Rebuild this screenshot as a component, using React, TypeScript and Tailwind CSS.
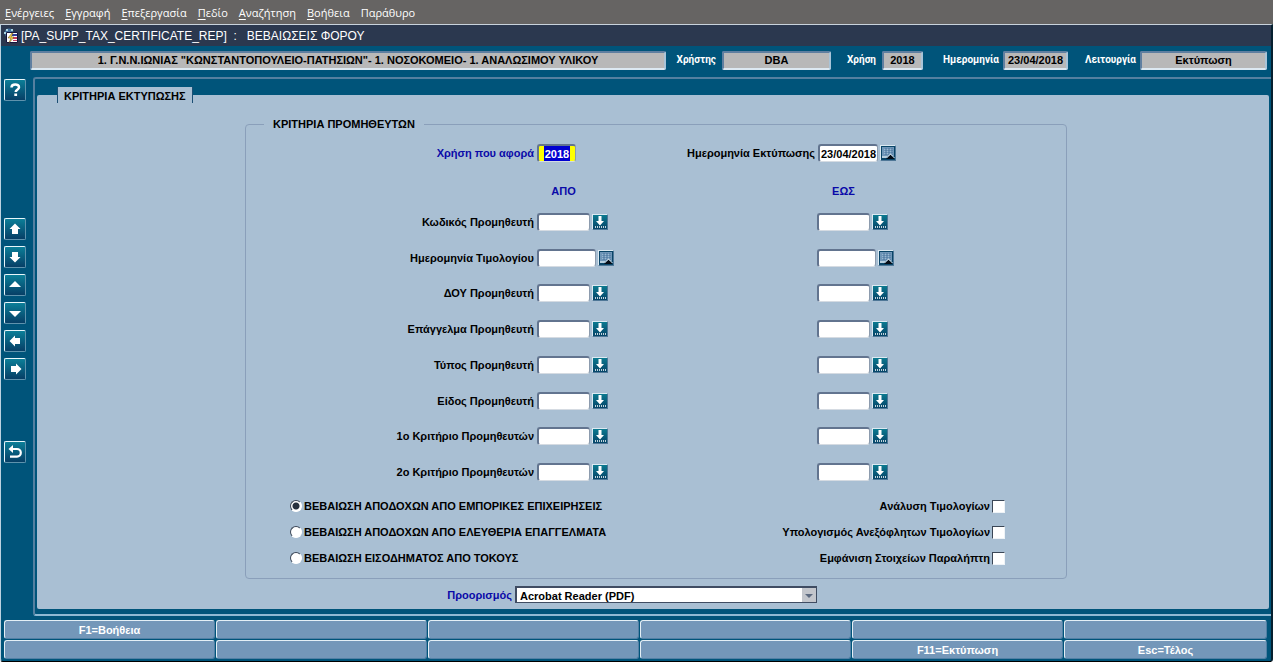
import type { ReactNode } from 'react'

const menus = ['Ενέργειες', 'Εγγραφή', 'Επεξεργασία', 'Πεδίο', 'Αναζήτηση', 'Βοήθεια']

const criteria = [
  { id: 'kodikos', label: 'Κωδικός Προμηθευτή', date: false },
  { id: 'timologio', label: 'Ημερομηνία Τιμολογίου', date: true },
  { id: 'doy', label: 'ΔΟΥ Προμηθευτή', date: false },
  { id: 'epaggelma', label: 'Επάγγελμα Προμηθευτή', date: false },
  { id: 'typos', label: 'Τύπος Προμηθευτή', date: false },
  { id: 'eidos', label: 'Είδος Προμηθευτή', date: false },
  { id: 'krit1', label: '1ο Κριτήριο Προμηθευτών', date: false },
  { id: 'krit2', label: '2ο Κριτήριο Προμηθευτών', date: false },
]

const reports = [
  'ΒΕΒΑΙΩΣΗ ΑΠΟΔΟΧΩΝ ΑΠΟ ΕΜΠΟΡΙΚΕΣ ΕΠΙΧΕΙΡΗΣΕΙΣ',
  'ΒΕΒΑΙΩΣΗ ΑΠΟΔΟΧΩΝ ΑΠΟ ΕΛΕΥΘΕΡΙΑ ΕΠΑΓΓΕΛΜΑΤΑ',
  'ΒΕΒΑΙΩΣΗ ΕΙΣΟΔΗΜΑΤΟΣ ΑΠΟ ΤΟΚΟΥΣ',
]

const options = ['Ανάλυση Τιμολογίων', 'Υπολογισμός Ανεξόφλητων Τιμολογίων', 'Εμφάνιση Στοιχείων Παραλήπτη']

const functionKeys = ['F1=Βοήθεια', '', '', '', '', '', '', '', '', '', 'F11=Εκτύπωση', 'Esc=Τέλος']

const fieldStyle =
  'h-[18px] rounded-[3px] border-t-2 border-l-2 border-r border-b border-t-[#62748f] border-l-[#62748f] border-r-[#8c9bad] border-b-[#d5dbe2] bg-white text-center outline-none'

const statusStyle =
  'h-[19px] min-w-0 rounded-[2px] border-2 border-t-[#5f7fa0] border-l-[#5f7fa0] border-r-[#a9c4d8] border-b-[#dde9f2] bg-[#b8b8b8] text-center text-black outline-none'

function AppIcon() {
  return (
    <svg width="16" height="16" viewBox="0 0 16 16" aria-hidden="true" className="shrink-0">
      <circle cx="6" cy="5" r="4.5" fill="#3f6f9e" />
      <path d="M3 1h2v2H3zM8 1h2v2H8zM1 4h3v2H1z" fill="#a9d3e0" />
      <path d="M3.500 4.500h11v10h-11z" fill="#fff" stroke="#14143c" />
      <path d="M9 6h5v2H9z" fill="#2c3f9c" />
      <path d="M10 9h4v2h-4zM10 12h4v1h-4z" fill="#c33a5c" />
      <path d="M9 5 5 10h3l-2 5 5-6H8l2-4z" fill="#ffe14a" stroke="#5a3a10" strokeWidth=".5" />
    </svg>
  )
}

function ToolButton({ label, children }: { label: string; children: ReactNode }) {
  return (
    <button
      type="button"
      aria-label={label}
      className="flex h-[22px] w-[22px] items-center justify-center rounded-[2px] border border-t-[#e8f6fa] border-l-[#e8f6fa] border-r-[#5f93ad] border-b-[#5f93ad] bg-linear-to-b from-[#0c7f98] to-[#073f66]"
    >
      <svg width="18" height="18" viewBox="0 0 18 18" fill="#fff" aria-hidden="true" className="shrink-0">
        {children}
      </svg>
    </button>
  )
}

function PickButton({ date, label }: { date?: boolean; label: string }) {
  return (
    <button
      type="button"
      aria-label={label}
      className="h-4 w-4 shrink-0 border border-t-[#dceaf2] border-l-[#dceaf2] border-r-[#4f7797] border-b-[#4f7797] bg-linear-to-b from-[#0d7a90] to-[#064468]"
    >
      {date ? (
        <svg width="14" height="14" viewBox="0 0 14 14" aria-hidden="true" className="block">
          <path d="M0 0h14v14H0z" fill="#0a4568" />
          <path d="M1 1h12v9H1z" fill="#6f96b8" />
          <path d="M3 3h9v1H3zM3 5h9v1H3zM3 7h9v1H3z" fill="#98b8d2" />
          <path d="M5 2v7M8 2v7M11 2v7" stroke="#47709a" />
          <path d="M1 10h6l-2 2H1z" fill="#b6cede" />
          <path d="M5 13 9.500 8.500 13 12v1z" fill="#050d18" />
          <path d="m5.500 12 4-4 4 4" fill="none" stroke="#e6f0f6" />
        </svg>
      ) : (
        <svg width="14" height="14" viewBox="0 0 14 14" aria-hidden="true" className="block">
          <path d="M5.500 1h3v5H11L7 10.500 3 6h2.500z" fill="#fff" />
          <path d="M2 12h11" stroke="#fff" strokeWidth="1.500" strokeDasharray="1 1" />
        </svg>
      )}
    </button>
  )
}

function StatusField({ id, label, value, labelClass, fieldClass }: {
  id: string
  label: string
  value: string
  labelClass: string
  fieldClass: string
}) {
  return (
    <div className="flex items-center">
      <label htmlFor={id} className={`text-right font-[Roboto,sans-serif] text-[10px] text-white ${labelClass}`}>
        {label}
      </label>
      <input id={id} readOnly value={value} className={`${statusStyle} ${fieldClass}`} />
    </div>
  )
}

function RangeField({ id, label, date }: { id: string; label: string; date: boolean }) {
  return (
    <div className="flex items-center gap-[2px]">
      <input id={id} aria-label={label} className={`${fieldStyle} ${date ? 'w-[59px]' : 'w-[53px]'}`} />
      <PickButton date={date} label={`Επιλογή: ${label}`} />
    </div>
  )
}

export default function App() {
  return (
    <div className="bg-white font-['Liberation_Sans',Arial,sans-serif] text-[11px] leading-4 font-bold text-black">
      <nav className="flex h-6 items-center gap-[11px] bg-[#666463] pt-[2px] pl-[5px] font-['Open_Sans',sans-serif] font-normal text-white">
        {menus.map(m => (
          <button key={m} type="button">
            <span className="underline underline-offset-2">{m[0]}</span>
            {m.slice(1)}
          </button>
        ))}
        <button type="button">Παράθυρο</button>
      </nav>

      <div className="rounded-b-[3px] border-t border-r-2 border-b border-l border-t-[#c9d3dc] border-r-[#06202f] border-b-black border-l-[#bcd2e0] bg-[#00547a]">
        <header className="flex h-[21px] items-center gap-[2px] bg-[#2b384f] pl-[2px] text-[12px] font-normal text-white">
          <AppIcon />
          <h1 className="whitespace-pre">[PA_SUPP_TAX_CERTIFICATE_REP]  :   ΒΕΒΑΙΩΣΕΙΣ ΦΟΡΟΥ</h1>
        </header>

        <div className="flex h-[31px] items-center pr-1 pb-[3px] pl-[29px]">
          <input
            aria-label="Μονάδα"
            readOnly
            value={'1. Γ.Ν.Ν.ΙΩΝΙΑΣ "ΚΩΝΣΤΑΝΤΟΠΟΥΛΕΙΟ-ΠΑΤΗΣΙΩΝ"- 1. ΝΟΣΟΚΟΜΕΙΟ- 1. ΑΝΑΛΩΣΙΜΟΥ ΥΛΙΚΟΥ'}
            className={`${statusStyle} flex-1`}
          />
          <StatusField id="user" label="Χρήστης" value="DBA" labelClass="w-14 pr-[6px]" fieldClass="w-[109px]" />
          <StatusField id="year" label="Χρήση" value="2018" labelClass="w-[51px] pr-[6px]" fieldClass="w-[41px]" />
          <StatusField id="date" label="Ημερομηνία" value="23/04/2018" labelClass="w-20 pr-1" fieldClass="w-[65px]" />
          <StatusField id="mode" label="Λειτουργία" value="Εκτύπωση" labelClass="w-[72px] pr-1" fieldClass="w-[127px]" />
        </div>

        <div className="flex">
          <aside className="flex w-8 shrink-0 flex-col pt-[2px] pl-[3px]">
            <ToolButton label="Βοήθεια">
              <path d="M5.500 6.500C5.500 2.500 13 2.500 13 6.200c0 2.500-3.300 2.600-3.300 4.800" fill="none" stroke="#fff" strokeWidth="2.500" />
              <path d="M8.300 12.500h2.800V15H8.300z" />
            </ToolButton>
            <div className="mt-[117px] flex flex-col gap-[6px]">
              <ToolButton label="Προηγούμενο μπλοκ">
                <path d="M9 3.500l5.500 5.500H12v5H6V9H3.500z" />
              </ToolButton>
              <ToolButton label="Επόμενο μπλοκ">
                <path d="M9 14.500l5.500-5.500H12V4H6v5H3.500z" />
              </ToolButton>
              <ToolButton label="Προηγούμενη εγγραφή">
                <path d="M9 5l6 6H3z" />
              </ToolButton>
              <ToolButton label="Επόμενη εγγραφή">
                <path d="M9 13l6-6H3z" />
              </ToolButton>
              <ToolButton label="Προηγούμενο πεδίο">
                <path d="M3.500 9L9 3.500V6h5v6H9v2.500z" />
              </ToolButton>
              <ToolButton label="Επόμενο πεδίο">
                <path d="M15.500 9L10 3.500V6H5v6h5v2.500z" />
              </ToolButton>
            </div>
            <div className="mt-[61px]">
              <ToolButton label="Έξοδος">
                <path d="M5 6h6a3.800 3.800 0 0 1 0 7.600H4" fill="none" stroke="#fff" strokeWidth="2.200" />
                <path d="M2.500 6L7 2v8z" />
              </ToolButton>
            </div>
          </aside>

          <main className="flex-1 rounded-l-[3px] border-t-2 border-b-2 border-l-2 border-t-[#5580a0] border-b-[#8fb9d3] border-l-[#5580a0] pt-2 pr-[2px] pb-[5px] pl-[2px]">
            <h2 className="relative -mb-2 ml-5 h-4 w-fit border-r border-l border-[#1c4f74] bg-[#a9bfd3] px-[6px] leading-[18px]">
              ΚΡΙΤΗΡΙΑ ΕΚΤΥΠΩΣΗΣ
            </h2>
            <div className="rounded-[2px] bg-[#a9bfd3] pt-[21px] pb-[6px] pl-[6px]">
              <div className="mx-auto w-[822px]">
                <fieldset className="rounded-[4px] border border-[#8a9fba] pb-3">
                  <legend className="ml-[18px] px-[9px]">ΚΡΙΤΗΡΙΑ ΠΡΟΜΗΘΕΥΤΩΝ</legend>

                  <div className="flex items-center pt-3">
                    <label htmlFor="forYear" className="mr-[3px] w-[288px] text-right text-[#0909a8]">
                      Χρήση που αφορά
                    </label>
                    <div className="flex w-[281px] items-center justify-between pr-[3px]">
                      <div className="flex h-[18px] w-[39px] justify-center rounded-[3px] border-t-2 border-r border-b border-l-2 border-t-[#62748f] border-r-[#8c9bad] border-b-[#d5dbe2] border-l-[#62748f] bg-[#ffff00]">
                        <input id="forYear" defaultValue="2018" className="h-[15px] w-[26px] bg-[#0000d0] text-center text-white outline-none" />
                      </div>
                      <label htmlFor="printDate">Ημερομηνία Εκτύπωσης</label>
                    </div>
                    <div className="flex items-center gap-[2px]">
                      <input id="printDate" defaultValue="23/04/2018" className={`${fieldStyle} w-[60px]`} />
                      <PickButton date label="Ημερολόγιο" />
                    </div>
                  </div>

                  <div className="mt-[21px] flex pl-[291px] text-center text-[#0909a8]">
                    <div className="w-[280px]">
                      <div className="w-[53px]">ΑΠΟ</div>
                    </div>
                    <div className="w-[53px]">ΕΩΣ</div>
                  </div>

                  <div className="mt-[14px] flex h-[268px] flex-col justify-between">
                    {criteria.map(c => (
                      <div key={c.id} className="flex items-center">
                        <label htmlFor={`${c.id}-from`} className="mr-[3px] w-[288px] text-right">
                          {c.label}
                        </label>
                        <div className="w-[280px]">
                          <RangeField id={`${c.id}-from`} label={`${c.label} από`} date={c.date} />
                        </div>
                        <RangeField id={`${c.id}-to`} label={`${c.label} έως`} date={c.date} />
                      </div>
                    ))}
                  </div>

                  <div className="mt-[17px] flex justify-between pr-[61px] pl-11">
                    <div className="flex flex-col gap-[10px]">
                      {reports.map((r, i) => (
                        <label key={r} className="flex items-center gap-[2px]">
                          <input
                            type="radio"
                            name="report"
                            defaultChecked={i === 0}
                            className="h-3 w-3 appearance-none rounded-full border border-t-[#3a4656] border-r-white border-b-white border-l-[#3a4656] bg-white checked:bg-[radial-gradient(#26303e_0_3px,#fff_4px)]"
                          />
                          {r}
                        </label>
                      ))}
                    </div>
                    <div className="flex flex-col items-end gap-[10px]">
                      {options.map(o => (
                        <label key={o} className="flex items-center gap-[2px]">
                          {o}
                          <input
                            type="checkbox"
                            className="h-[13px] w-[13px] appearance-none border border-t-[#3a4656] border-r-[#eef3f7] border-b-[#eef3f7] border-l-[#3a4656] bg-white checked:bg-[#26303e]"
                          />
                        </label>
                      ))}
                    </div>
                  </div>
                </fieldset>

                <div className="mt-[7px] flex items-center">
                  <label htmlFor="target" className="mr-[3px] w-[267px] text-right text-[#0909a8]">
                    Προορισμός
                  </label>
                  <div className="relative h-[17px] w-[302px]">
                    <select
                      id="target"
                      className="block h-[17px] w-full appearance-none border-t-2 border-r border-b border-l-2 border-[#3f4c62] bg-white pl-[3px] outline-none"
                    >
                      <option>Acrobat Reader (PDF)</option>
                    </select>
                    <svg className="pointer-events-none absolute top-[2px] right-px" width="14" height="14" viewBox="0 0 14 14" aria-hidden="true">
                      <path d="M0 0h14v14H0z" fill="#c3c6cc" />
                      <path d="M3 6h8l-4 4z" fill="#5d6a80" />
                    </svg>
                  </div>
                </div>
              </div>
            </div>
          </main>
        </div>

        <footer className="grid grid-cols-[repeat(5,211fr)_203fr] gap-x-px gap-y-px pt-1 pr-1 pb-[2px] pl-[3px]">
          {functionKeys.map((k, i) => (
            <button
              key={i}
              type="button"
              aria-label={k || `Κενό ${i + 1}`}
              className="h-[19px] rounded-[3px] border border-t-[#e4eff6] border-r-[#5280a5] border-b-[#5280a5] border-l-[#e4eff6] bg-[#7497b9] text-white"
            >
              {k}
            </button>
          ))}
        </footer>
      </div>
    </div>
  )
}
